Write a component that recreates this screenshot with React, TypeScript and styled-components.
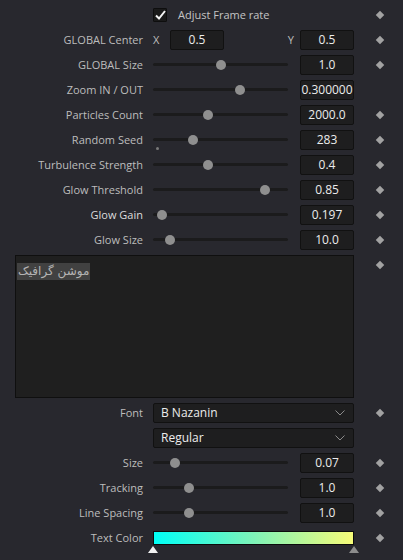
import React from 'react'
import styled, { createGlobalStyle } from 'styled-components'

const GlobalStyle = createGlobalStyle`
  html, body {
    margin: 0;
    padding: 0;
    background: #28282e;
  }
  body {
    font-family: 'Open Sans', 'Noto Sans', sans-serif;
    -webkit-font-smoothing: antialiased;
  }
`

interface SliderParam {
  label: string
  value: string
  knob: number
  bright?: boolean
  keyframe?: boolean
  marker?: boolean
}

const topSliders: SliderParam[] = [
  { label: 'Zoom IN / OUT', value: '0.300000', knob: 87, keyframe: false },
  { label: 'Particles Count', value: '2000.0', knob: 55 },
  { label: 'Random Seed', value: '283', knob: 40, marker: true },
  { label: 'Turbulence Strength', value: '0.4', knob: 55 },
  { label: 'Glow Threshold', value: '0.85', knob: 112 },
  { label: 'Glow Gain', value: '0.197', knob: 9, bright: true },
  { label: 'Glow Size', value: '10.0', knob: 17 },
]

const textSliders: SliderParam[] = [
  { label: 'Size', value: '0.07', knob: 22 },
  { label: 'Tracking', value: '1.0', knob: 36 },
  { label: 'Line Spacing', value: '1.0', knob: 36 },
]

const Panel = styled.div`
  width: 403px;
  height: 560px;
  padding-top: 2px;
  box-sizing: border-box;
  background: #28282e;
  overflow: hidden;
`

const Row = styled.div`
  display: grid;
  grid-template-columns: 143px 201px 1fr;
  column-gap: 10px;
  align-items: center;
  height: 25px;
`

const Label = styled.div<{ $bright?: boolean }>`
  text-align: right;
  font-size: 11px;
  color: ${p => (p.$bright ? '#dcdcdc' : '#bdbdbd')};
  white-space: nowrap;
`

const KeyCell = styled.div`
  display: flex;
  align-items: center;
  padding-left: 13px;
  height: 100%;
`

const Diamond = styled.div<{ $hidden?: boolean }>`
  width: 6px;
  height: 6px;
  background: #a2a2a2;
  transform: rotate(45deg);
  visibility: ${p => (p.$hidden ? 'hidden' : 'visible')};
`

const CheckWrap = styled.label`
  display: flex;
  align-items: center;
  gap: 11px;
  font-size: 11px;
  color: #c4c4c4;
`

const CheckBox = styled.span`
  width: 12px;
  height: 12px;
  background: #1a1a1a;
  border: 1px solid #0e0e0e;
  border-radius: 1px;
  display: flex;
  align-items: center;
  justify-content: center;
`

const ValueBox = styled.div`
  width: 54px;
  height: 20px;
  box-sizing: border-box;
  background: #1e1e1f;
  border: 1px solid #111;
  border-radius: 2px;
  display: flex;
  align-items: center;
  justify-content: center;
  font-size: 12px;
  color: #ececec;
  overflow: hidden;
  white-space: nowrap;
`

const PointControl = styled.div`
  display: grid;
  grid-template-columns: 17px 54px 1fr 54px;
  align-items: center;
  font-size: 11px;
  color: #bdbdbd;
`

const AxisY = styled.span`
  text-align: right;
  padding-right: 6px;
`

const SliderControl = styled.div`
  display: grid;
  grid-template-columns: 135px 54px;
  column-gap: 12px;
  align-items: center;
`

const Track = styled.div`
  position: relative;
  height: 3px;
  background: #1b1b1c;
  border-radius: 2px;
`

const Knob = styled.div`
  position: absolute;
  top: 50%;
  width: 10px;
  height: 10px;
  margin: -5px 0 0 -5px;
  border-radius: 50%;
  background: #8f8f8f;
`

const DefaultMark = styled.div`
  position: absolute;
  left: 3px;
  top: 9px;
  width: 3px;
  height: 3px;
  border-radius: 50%;
  background: #7a7a7a;
`

const TextRow = styled.div`
  display: grid;
  grid-template-columns: 354px 1fr;
  margin: 3px 0 2px;
`

const TextArea = styled.div`
  margin-left: 15px;
  height: 143px;
  box-sizing: border-box;
  background: #1f1f1f;
  border: 1px solid #0f0f0f;
  padding: 2px 1px;
`

const Selected = styled.span`
  display: inline-block;
  background: #414141;
  color: #b4b4b4;
  font-family: 'DejaVu Sans', 'Noto Sans', sans-serif;
  font-size: 12px;
  line-height: 17px;
  padding: 0 1px;
`

const TextKey = styled(KeyCell)`
  align-items: flex-start;
  padding-top: 7px;
  padding-left: 23px;
  height: auto;
`

const Select = styled.div`
  height: 20px;
  box-sizing: border-box;
  background: #1e1e1f;
  border: 1px solid #111;
  border-radius: 2px;
  display: flex;
  align-items: center;
  justify-content: space-between;
  padding: 0 8px 0 7px;
  font-size: 12px;
  color: #ececec;
`

const ColorControl = styled.div`
  position: relative;
  height: 25px;
  display: flex;
  align-items: center;
`

const Gradient = styled.div`
  flex: 1;
  height: 12px;
  border: 1px solid #0c0c0c;
  background: linear-gradient(90deg, #00fff6 0%, #7ef3b8 50%, #f6fb78 100%);
`

const Stop = styled.div<{ $side: 'left' | 'right'; $color: string }>`
  position: absolute;
  top: 21px;
  ${p => p.$side}: -5px;
  width: 0;
  height: 0;
  border-left: 5px solid transparent;
  border-right: 5px solid transparent;
  border-bottom: 7px solid ${p => p.$color};
`

const Chevron = () => (
  <svg width="10" height="6" viewBox="0 0 10 6">
    <path d="M0.5 0.5 L5 5 L9.5 0.5" fill="none" stroke="#8a8a8a" strokeWidth="1" />
  </svg>
)

const Check = () => (
  <svg width="11" height="10" viewBox="0 0 11 10">
    <path d="M1 5.5 L4 8.5 L10 1" fill="none" stroke="#f4f4f4" strokeWidth="2" />
  </svg>
)

const SliderRow = ({ p }: { p: SliderParam }) => (
  <Row>
    <Label $bright={p.bright}>{p.label}</Label>
    <SliderControl>
      <Track>
        <Knob style={{ left: p.knob }} />
        {p.marker && <DefaultMark />}
      </Track>
      <ValueBox>{p.value}</ValueBox>
    </SliderControl>
    <KeyCell>
      <Diamond $hidden={p.keyframe === false} />
    </KeyCell>
  </Row>
)

export default function App() {
  return (
    <Panel>
      <GlobalStyle />
      <Row>
        <span />
        <CheckWrap>
          <CheckBox>
            <Check />
          </CheckBox>
          Adjust Frame rate
        </CheckWrap>
        <KeyCell>
          <Diamond />
        </KeyCell>
      </Row>
      <Row>
        <Label>GLOBAL Center</Label>
        <PointControl>
          <span>X</span>
          <ValueBox>0.5</ValueBox>
          <AxisY>Y</AxisY>
          <ValueBox>0.5</ValueBox>
        </PointControl>
        <KeyCell>
          <Diamond />
        </KeyCell>
      </Row>
      <SliderRow p={{ label: 'GLOBAL Size', value: '1.0', knob: 68 }} />
      {topSliders.map(p => (
        <SliderRow key={p.label} p={p} />
      ))}
      <TextRow>
        <TextArea>
          <Selected dir="rtl">موشن گرافیک</Selected>
        </TextArea>
        <TextKey>
          <Diamond />
        </TextKey>
      </TextRow>
      <Row>
        <Label>Font</Label>
        <Select>
          B Nazanin
          <Chevron />
        </Select>
        <KeyCell>
          <Diamond />
        </KeyCell>
      </Row>
      <Row>
        <span />
        <Select>
          Regular
          <Chevron />
        </Select>
        <span />
      </Row>
      {textSliders.map(p => (
        <SliderRow key={p.label} p={p} />
      ))}
      <Row>
        <Label>Text Color</Label>
        <ColorControl>
          <Gradient />
          <Stop $side="left" $color="#f2f2f2" />
          <Stop $side="right" $color="#8c8c8c" />
        </ColorControl>
        <KeyCell>
          <Diamond />
        </KeyCell>
      </Row>
    </Panel>
  )
}
